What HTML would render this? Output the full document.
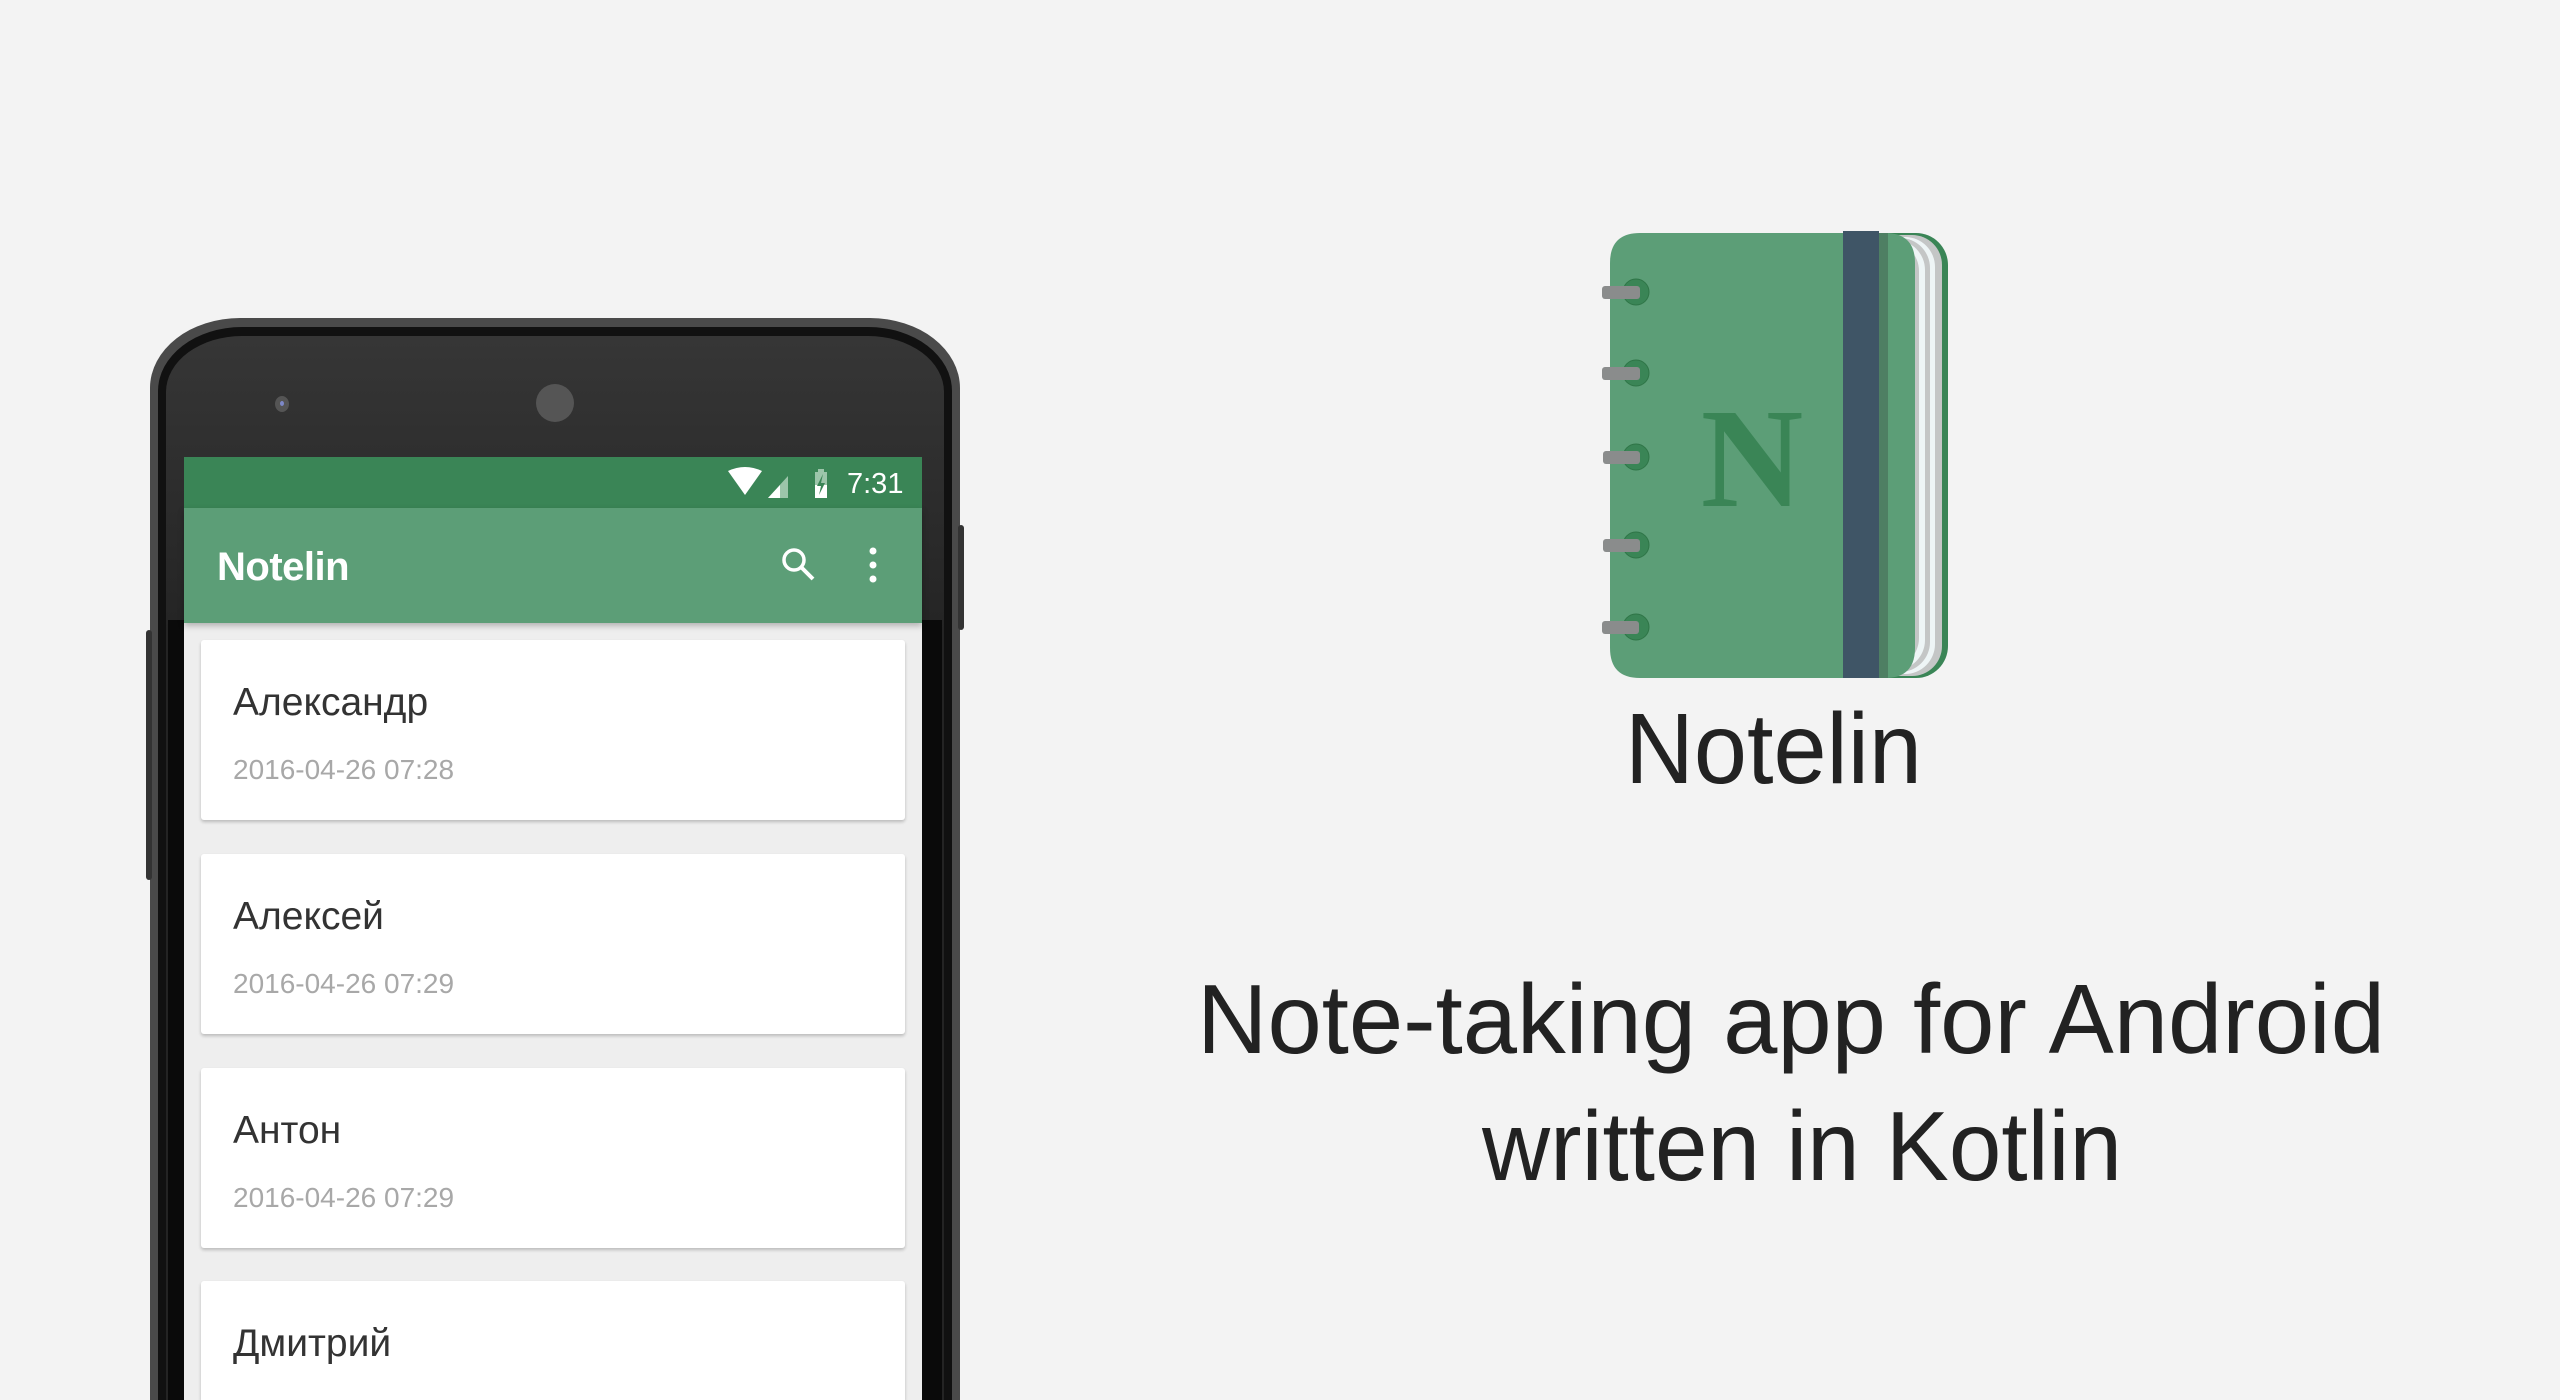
<!DOCTYPE html>
<html style="overflow:hidden;width:2560px;height:1400px;"><head><meta charset="utf-8"><style>
html,body{margin:0;padding:0;}
body{width:2560px;height:1400px;background:#f3f3f3;position:relative;overflow:hidden;font-family:"Liberation Sans","DejaVu Sans",sans-serif;}
.abs{position:absolute;}
.card{position:absolute;left:201px;width:704px;background:#fff;border-radius:3px;box-shadow:0 2px 3px rgba(0,0,0,.22);}
.name{position:absolute;left:32px;top:41px;font-size:39px;color:#333;}
.date{position:absolute;left:32px;top:114px;font-size:28px;color:#a8a8a8;}
</style></head><body>
<!-- phone -->
<div class="abs" style="left:150px;top:318px;width:810px;height:1082px;background:#4a4a4a;border-radius:90px 90px 0 0/70px 70px 0 0;"></div>
<div class="abs" style="left:158px;top:327px;width:794px;height:1073px;background:#111;border-radius:84px 84px 0 0/64px 64px 0 0;"></div>
<div class="abs" style="left:166px;top:336px;width:778px;height:1064px;background:linear-gradient(180deg,#363636,#242424 300px);border-radius:76px 76px 0 0/56px 56px 0 0;"></div>
<div class="abs" style="left:168px;top:620px;width:774px;height:780px;background:#0a0a0a;"></div>
<div class="abs" style="left:146px;top:630px;width:6px;height:250px;background:#333;border-radius:3px;"></div>
<div class="abs" style="left:958px;top:525px;width:6px;height:105px;background:#333;border-radius:3px;"></div>
<div class="abs" style="left:275px;top:396px;width:14px;height:16px;background:#555;border-radius:50%;"></div>
<div class="abs" style="left:280px;top:401px;width:4px;height:5px;background:#7d88c8;border-radius:50%;"></div>
<div class="abs" style="left:536px;top:384px;width:38px;height:38px;background:#555;border-radius:50%;"></div>
<!-- screen -->
<div class="abs" style="left:184px;top:457px;width:738px;height:943px;background:#eeeeee;"></div>
<div class="abs" style="left:184px;top:457px;width:738px;height:51px;background:#3a8556;"></div>
<div class="abs" style="left:184px;top:508px;width:738px;height:115px;background:#5c9e77;box-shadow:0 3px 6px rgba(0,0,0,.25);"></div>
<svg class="abs" style="left:720px;top:465px" width="140" height="36" viewBox="0 0 140 36">
<path d="M8 6 Q25 -2 42 6 L25 30 Z" fill="#fff"/>
<path d="M48 33 L68 11 L68 33 Z" fill="#9cc5aa"/><path d="M48 33 L60 20 L60 33 Z" fill="#fff"/>
<rect x="95" y="7" width="12" height="26" fill="#9cc5aa"/><rect x="98" y="4" width="6" height="4" fill="#9cc5aa"/>
<rect x="95" y="20" width="12" height="13" fill="#fff"/><path d="M103 9 L97 21 L101 21 L99 30 L105 18 L101 18 Z" fill="#3a8556"/>
</svg>
<div class="abs" style="left:847px;top:468px;font-size:29px;color:#fff;">7:31</div>
<div class="abs" style="left:217px;top:545px;font-size:40px;color:#fff;font-weight:bold;letter-spacing:-0.5px;">Notelin</div>
<svg class="abs" style="left:778px;top:545px" width="110" height="42" viewBox="0 0 110 42">
<circle cx="16" cy="15" r="10" fill="none" stroke="#fff" stroke-width="3.5"/>
<path d="M23 22 L35 34" stroke="#fff" stroke-width="4"/>
<circle cx="95" cy="6" r="3.5" fill="#fff"/><circle cx="95" cy="20" r="3.5" fill="#fff"/><circle cx="95" cy="34" r="3.5" fill="#fff"/>
</svg>
<div class="card" style="top:640px;height:180px;"><div class="name">Александр</div><div class="date">2016-04-26 07:28</div></div>
<div class="card" style="top:854px;height:180px;"><div class="name">Алексей</div><div class="date">2016-04-26 07:29</div></div>
<div class="card" style="top:1068px;height:180px;"><div class="name">Антон</div><div class="date">2016-04-26 07:29</div></div>
<div class="card" style="top:1281px;height:119px;border-radius:3px 3px 0 0;"><div class="name">Дмитрий</div><div class="date">2016-04-26 07:29</div></div>
<!-- notebook -->
<svg class="abs" style="left:1590px;top:225px" width="370" height="460" viewBox="1590 225 370 460">
<rect x="1700" y="233" width="248" height="445" rx="32" fill="#3a8556"/>
<rect x="1700" y="235" width="242" height="441" rx="30" fill="#c4c6c6"/>
<rect x="1700" y="237" width="235" height="437" rx="30" fill="#eef5f6"/>
<rect x="1700" y="238" width="230" height="434" rx="30" fill="#c4c6c6"/>
<rect x="1700" y="240" width="225" height="430" rx="30" fill="#eef5f6"/>
<rect x="1700" y="241" width="219" height="427" rx="30" fill="#c4c6c6"/>
<path d="M1610 263 Q1610 233 1640 233 L1885 233 Q1915 233 1915 263 L1915 648 Q1915 678 1885 678 L1640 678 Q1610 678 1610 648 Z" fill="#5c9e77"/>
<rect x="1879" y="233" width="9" height="445" fill="#4e7f63"/>
<rect x="1843" y="231" width="36" height="447" fill="#3f5566"/>
<g fill="#3a8556" stroke="#2f7547" stroke-width="1"><circle cx="1636" cy="292" r="13"/><circle cx="1636" cy="373" r="13"/><circle cx="1636" cy="457" r="13"/><circle cx="1636" cy="545" r="13"/><circle cx="1636" cy="627" r="13"/></g>
<g fill="#8a8c8c"><rect x="1602" y="286" width="38" height="13" rx="3"/><rect x="1602" y="367" width="38" height="13" rx="3"/><rect x="1603" y="451" width="37" height="13" rx="3"/><rect x="1603" y="539" width="37" height="13" rx="3"/><rect x="1602" y="621" width="37" height="13" rx="3"/></g>
<text x="1752" y="506" text-anchor="middle" font-family="Liberation Serif,serif" font-weight="bold" font-size="142" fill="#3a8556">N</text>
</svg>
<svg class="abs" style="left:0;top:0" width="2560" height="1400">
<text x="1625" y="783" textLength="297" lengthAdjust="spacingAndGlyphs" font-family="Liberation Sans,sans-serif" font-size="100" fill="#222">Notelin</text>
<text x="1197" y="1053" textLength="1188" lengthAdjust="spacingAndGlyphs" font-family="Liberation Sans,sans-serif" font-size="98" fill="#222">Note-taking app for Android</text>
<text x="1482" y="1180" textLength="640" lengthAdjust="spacingAndGlyphs" font-family="Liberation Sans,sans-serif" font-size="98" fill="#222">written in Kotlin</text>
</svg>
</body></html>
